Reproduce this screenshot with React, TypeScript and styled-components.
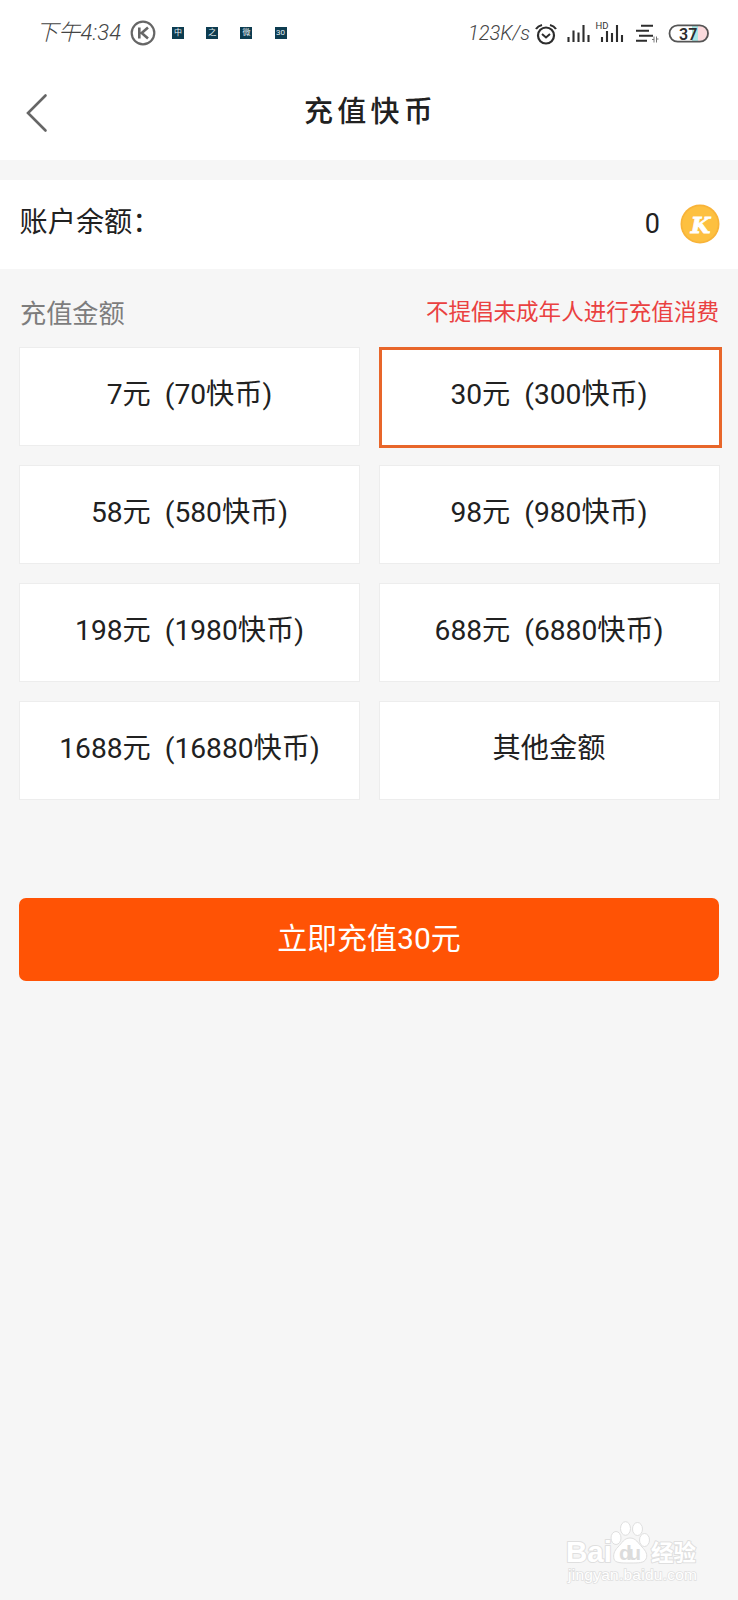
import React from "react";
import styled, { createGlobalStyle } from "styled-components";

const GlobalStyle = createGlobalStyle`
  * { box-sizing: border-box; }
  body { margin: 0; background: #f6f6f6; }
  button { font: inherit; color: inherit; border: 0; padding: 0; background: none; }
`;

const Page = styled.div`
  width: 738px;
  height: 1600px;
  display: flex;
  flex-direction: column;
  background: #f6f6f6;
  color: #212121;
  font-family: Roboto, "Noto Sans CJK SC", sans-serif;
  overflow: hidden;
`;

const StatusBar = styled.header`
  height: 66px;
  padding: 0 28px 0 36px;
  display: flex;
  align-items: center;
  justify-content: space-between;
  background: #fff;
`;

const StatusGroup = styled.div`
  display: flex;
  align-items: center;
`;

const StatusText = styled.span<{ $width: number; $size: number; $spacing?: number }>`
  width: ${(p) => p.$width}px;
  font-size: ${(p) => p.$size}px;
  letter-spacing: ${(p) => p.$spacing ?? 0}px;
  font-weight: 300;
  font-style: italic;
  line-height: 30px;
  color: #444;
  white-space: nowrap;
`;

const Notices = styled.div`
  display: flex;
  gap: 22.2px;
  margin-left: 16px;
`;

const Notice = styled.span`
  width: 12px;
  height: 12px;
  display: flex;
  align-items: center;
  justify-content: center;
  background: #0d3c50;
  color: #e4f0f4;
  font-size: 8px;
  line-height: 12px;
  overflow: hidden;
`;

const TitleBar = styled.div`
  height: 94px;
  padding: 0 25px;
  display: grid;
  grid-template-columns: 30px 1fr 30px;
  align-items: center;
  background: #fff;
`;

const BackButton = styled.button`
  display: flex;
`;

const Title = styled.h1`
  margin: 0 0 2px;
  padding-left: 3px;
  text-align: center;
  font-size: 29px;
  font-weight: 500;
  letter-spacing: 4.3px;
  line-height: 40px;
`;

const Balance = styled.section`
  height: 89px;
  margin-top: 20px;
  padding: 0 18.5px 2px 19.5px;
  display: flex;
  align-items: center;
  background: #fff;
  font-size: 28.2px;
`;

const BalanceLabel = styled.span`
  flex: 1;
  line-height: 40px;
  margin-bottom: 1px;
`;

const BalanceValue = styled.span`
  font-size: 27px;
  margin-right: 19.5px;
`;

const AmountHeader = styled.div`
  height: 77.500px;
  padding: 25px 19px 0 20px;
  display: flex;
  justify-content: space-between;
`;

const AmountLabel = styled.span`
  font-size: 26.2px;
  line-height: 40px;
  color: #7d7d7d;
`;

const Warning = styled.span`
  font-size: 22.55px;
  line-height: 38px;
  color: #ea4141;
`;

const AmountGrid = styled.div`
  display: grid;
  grid-template-columns: 341px 341px;
  grid-auto-rows: 99.5px;
  gap: 18.5px;
  padding-left: 19px;
`;

const Amount = styled.button<{ $selected?: boolean }>`
  width: ${(p) => (p.$selected ? 343 : 341)}px;
  height: ${(p) => (p.$selected ? 101 : 99.5)}px;
  padding-bottom: ${(p) => (p.$selected ? 11 : 9)}px;
  padding-right: ${(p) => (p.$selected ? 2 : 0)}px;
  border: ${(p) => (p.$selected ? "3px solid #e8662a" : "1.5px solid #ededed")};
  background: #fff;
  font-size: 28.2px;
  white-space: pre;
`;

const PayButton = styled.button`
  margin: 98px 19px 0 19px;
  height: 82.5px;
  padding-bottom: 6px;
  border-radius: 7px;
  background: #ff5305;
  color: #fff;
  font-size: 30px;
`;

const Footer = styled.footer`
  margin-top: auto;
  padding: 0 36px 12px 0;
  display: flex;
  justify-content: flex-end;
`;

const AMOUNTS = [
  "7元  (70快币)",
  "30元  (300快币)",
  "58元  (580快币)",
  "98元  (980快币)",
  "198元  (1980快币)",
  "688元  (6880快币)",
  "1688元  (16880快币)",
  "其他金额",
];

const AppBadge = () => (
  <svg width="26" height="26" viewBox="0 0 26 26" fill="none" stroke="#666">
    <circle cx="13" cy="13" r="11.3" strokeWidth="2.2" />
    <path d="M9.3 7.500v11M18 7.500l-6.300 5.500 6.300 5.500" strokeWidth="2.600" />
  </svg>
);

const StatusIcons = () => (
  <svg width="176" height="30" viewBox="534 17 176 30" fill="none" stroke="#2d2d2d" strokeWidth="2.100">
    <circle cx="546" cy="34.500" r="8" strokeWidth="2.200" />
    <path d="M542 33l4 3.500 4-3.500" strokeWidth="2" />
    <path d="M536 28q2-3 6-4M556 28q-2-3-6-4" strokeWidth="2.200" />
    <path d="M568.500 36v5M573.500 29.500v11.500M578.500 31.500v9.500M583.500 24v17M588.500 34v7" />
    <path d="M602 36v5M607 30v11M612 32v9M617 24v17M622 34v7" />
    <path d="M641 24.800h12M636 29.800h13M639 34.800h14M636 39.800h11" />
    <path d="M652 38.500h2M654 35.500v6M656.500 35.500v6M656.500 38h2" strokeWidth="1" stroke="#777" />
    <text x="595.500" y="28" fontFamily="Roboto, sans-serif" fontSize="9.500" fill="#333" stroke="none">HD</text>
    <rect x="692" y="25" width="6" height="15" fill="#a9e6e4" stroke="none" />
    <path d="M698 25h3a7 7 0 0 1 2 14.500l-5 .5z" fill="#fbd9dc" stroke="none" />
    <rect x="669.500" y="24.300" width="38.500" height="16.400" rx="8.200" stroke="#555" strokeWidth="1.800" />
    <text x="679" y="38.500" fontFamily="Roboto, sans-serif" fontWeight="600" fontSize="16" fill="#2d2d2d" stroke="none">37</text>
  </svg>
);

const Coin = () => (
  <svg width="40" height="40" viewBox="0 0 40 40">
    <circle cx="20" cy="20" r="19.500" fill="#f8b338" />
    <circle cx="20" cy="20" r="17.800" fill="#fdc040" />
    <text x="20.500" y="28.500" textAnchor="middle" fontFamily="'DejaVu Serif', serif" fontStyle="italic" fontWeight="700" fontSize="22.500" fill="#fff" stroke="#fff" strokeWidth=".8">K</text>
  </svg>
);

const Watermark = () => (
  <svg width="136" height="68" viewBox="566 1519 136 68" fill="#fff" stroke="#dfdfdf" strokeWidth="1">
    <ellipse cx="616" cy="1537" rx="5" ry="6.500" />
    <ellipse cx="625.500" cy="1527.500" rx="5" ry="6.800" />
    <ellipse cx="637.500" cy="1528" rx="5" ry="6.500" />
    <ellipse cx="644.500" cy="1539" rx="5" ry="6.500" />
    <path d="M630 1537c6 0 8 5 12 9s6 8 4 12-7 4-16 4-15 0-16-4 0-8 4-12 6-9 12-9z" />
    <g fontWeight="700" strokeWidth="2" paintOrder="stroke" strokeLinejoin="round">
      <text x="566" y="1561" fontFamily="'Liberation Sans', sans-serif" fontSize="29" textLength="46" lengthAdjust="spacingAndGlyphs">Bai</text>
      <text x="619" y="1559" fontFamily="'Liberation Sans', sans-serif" fontSize="21" textLength="22" fill="#dcdcdc" stroke="none">du</text>
      <text x="651" y="1560" fontFamily="'Noto Sans CJK SC', sans-serif" fontSize="22.500">经验</text>
    </g>
    <text x="568" y="1579" fontFamily="'Liberation Sans', sans-serif" fontSize="15.500" textLength="129" strokeWidth="1.500" paintOrder="stroke">jingyan.baidu.com</text>
  </svg>
);

export default function App() {
  return (
    <Page>
      <GlobalStyle />
      <StatusBar>
        <StatusGroup>
          <StatusText $width={94} $size={22} $spacing={0.2}>下午4:34</StatusText>
          <AppBadge />
          <Notices>
            <Notice>中</Notice>
            <Notice>之</Notice>
            <Notice>微</Notice>
            <Notice>30</Notice>
          </Notices>
        </StatusGroup>
        <StatusGroup>
          <StatusText $width={66} $size={20}>123K/s</StatusText>
          <StatusIcons />
        </StatusGroup>
      </StatusBar>
      <TitleBar>
        <BackButton aria-label="返回">
          <svg width="24" height="40" viewBox="0 0 24 40" fill="none" stroke="#666" strokeWidth="2.600" strokeLinecap="round">
            <path d="M20.500 2.500L3 20l17.500 17.500" />
          </svg>
        </BackButton>
        <Title>充值快币</Title>
      </TitleBar>
      <Balance>
        <BalanceLabel>账户余额：</BalanceLabel>
        <BalanceValue>0</BalanceValue>
        <Coin />
      </Balance>
      <AmountHeader>
        <AmountLabel>充值金额</AmountLabel>
        <Warning>不提倡未成年人进行充值消费</Warning>
      </AmountHeader>
      <AmountGrid>
        {AMOUNTS.map((label, i) => (
          <Amount key={label} $selected={i === 1}>{label}</Amount>
        ))}
      </AmountGrid>
      <PayButton>立即充值30元</PayButton>
      <Footer>
        <Watermark />
      </Footer>
    </Page>
  );
}
